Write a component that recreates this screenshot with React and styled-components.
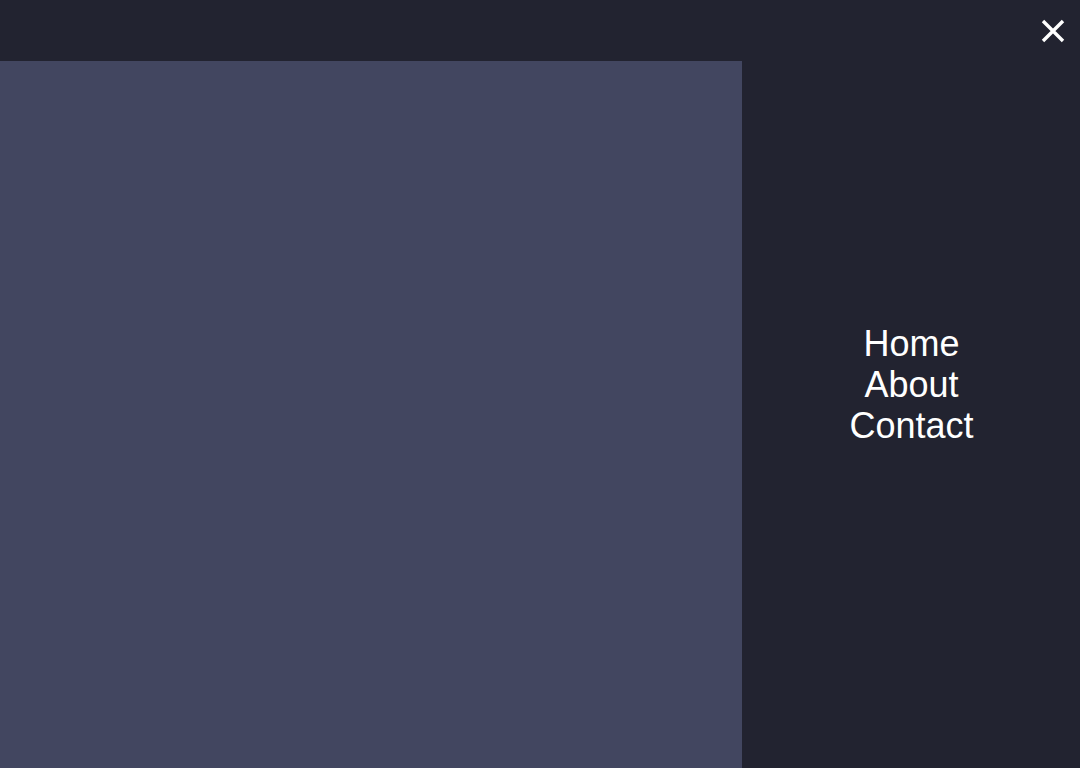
import React from "react";
import styled, { createGlobalStyle } from "styled-components";

const Global = createGlobalStyle`
  html, body { margin: 0; padding: 0; height: 100%; }
  body { background: #222330; font-family: "Liberation Sans", Arial, sans-serif; overflow: hidden; }
  #root { height: 100%; }
`;

const Layout = styled.div`
  display: grid;
  grid-template-columns: 742px 1fr;
  height: 768px;
  background: #222330;
`;

const LeftColumn = styled.div`
  display: flex;
  flex-direction: column;
`;

const Header = styled.header`
  height: 61px;
  flex: none;
  background: #222330;
`;

const Main = styled.main`
  flex: 1;
  background: #424660;
`;

const Drawer = styled.aside`
  position: relative;
  display: flex;
  align-items: center;
  justify-content: center;
  padding-left: 1px;
  background: #222330;
`;

const CloseButton = styled.button`
  position: absolute;
  top: 16px;
  right: 12px;
  width: 30px;
  height: 30px;
  padding: 0;
  border: none;
  background: transparent;
  display: flex;
  align-items: center;
  justify-content: center;
  cursor: pointer;
`;

const Nav = styled.nav`
  display: flex;
  flex-direction: column;
  align-items: center;
`;

const NavLink = styled.a`
  color: #ffffff;
  font-size: 36px;
  line-height: 41px;
  text-decoration: none;
`;

export default function App() {
  return (
    <>
      <Global />
      <Layout>
        <LeftColumn>
          <Header />
          <Main />
        </LeftColumn>
        <Drawer>
          <CloseButton aria-label="Close menu">
            <svg width="24" height="24" viewBox="0 0 24 24">
              <path d="M2 2 L22 22 M22 2 L2 22" stroke="#fff" strokeWidth="3.4" strokeLinecap="butt" />
            </svg>
          </CloseButton>
          <Nav>
            <NavLink href="#">Home</NavLink>
            <NavLink href="#">About</NavLink>
            <NavLink href="#">Contact</NavLink>
          </Nav>
        </Drawer>
      </Layout>
    </>
  );
}
